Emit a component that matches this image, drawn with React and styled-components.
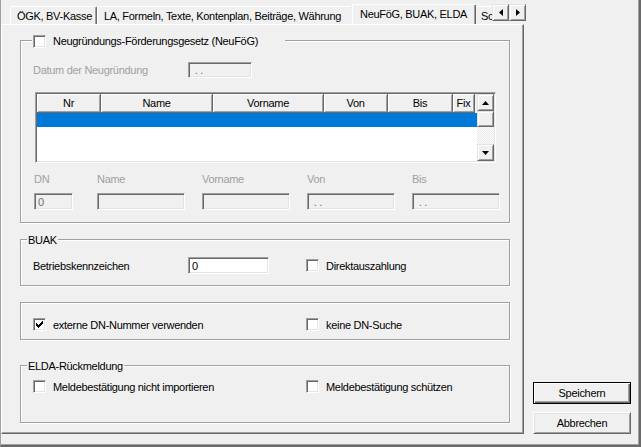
import React from "react";
import styled, { createGlobalStyle } from "styled-components";

const GlobalStyle = createGlobalStyle`
  html, body { margin: 0; padding: 0; background: #f0f0f0; }
  body {
    font-family: "Liberation Sans", Arial, sans-serif;
    font-size: 11px;
    letter-spacing: -0.3px;
    color: #000;
  }
  * { box-sizing: border-box; }
`;

const raised = `
  border: 1px solid;
  border-color: #e3e3e3 #696969 #696969 #e3e3e3;
  box-shadow: inset 1px 1px 0 #fff, inset -1px -1px 0 #a0a0a0;
`;

const sunken = `
  border: 1px solid;
  border-color: #a0a0a0 #fff #fff #a0a0a0;
  box-shadow: inset 1px 1px 0 #696969, inset -1px -1px 0 #e3e3e3;
`;

const S = {
  Window: styled.div`
    display: flex;
    width: 641px;
    height: 447px;
    background: #f0f0f0;
    border-left: 1px solid #a0a0a0;
    border-right: 2px solid #696969;
    border-bottom: 2px solid #696969;
    box-shadow: inset -1px -1px 0 #a0a0a0;
  `,
  TabControl: styled.div`
    display: flex;
    flex-direction: column;
    width: 525px;
    height: 434px;
    flex: none;
  `,
  TabStrip: styled.div`
    display: flex;
    height: 24px;
    padding-left: 9px;
  `,
  TabRow: styled.div`
    flex: 1;
    display: flex;
    align-items: flex-end;
    overflow: hidden;
  `,
  Tab: styled.div`
    flex: none;
    position: relative;
    width: ${p => p.$w}px;
    height: ${p => (p.$active ? 21 : 18)}px;
    margin: ${p => (p.$active ? "0 -2px -1px -2px" : "0")};
    z-index: ${p => (p.$active ? 1 : 0)};
    padding: 3px 0 0 ${p => (p.$active ? 7 : 6)}px;
    line-height: 13px;
    white-space: nowrap;
    overflow: hidden;
    background: #f0f0f0;
    border-top: 1px solid #fff;
    border-left: 1px solid #fff;
    border-right: 1px solid #696969;
    border-top-left-radius: 2px;
    border-top-right-radius: 2px;
    box-shadow: inset -1px 0 0 #a0a0a0;
  `,
  Arrows: styled.div`
    display: flex;
    align-self: flex-start;
    margin-top: 4px;
  `,
  ArrowButton: styled.div`
    width: 17px;
    height: 17px;
    display: flex;
    align-items: center;
    justify-content: center;
    background: #f0f0f0;
    ${raised}
  `,
  Panel: styled.div`
    width: 523px;
    height: 410px;
    padding: 15px 0 0 18px;
    border-top: 1px solid #fff;
    border-left: 1px solid #fff;
    border-right: 1px solid #696969;
    border-bottom: 1px solid #696969;
    box-shadow: inset -1px -1px 0 #a0a0a0;
  `,
  Group: styled.div`
    width: 490px;
    margin-top: ${p => p.$mt || 0}px;
    padding: ${p => p.$pad};
    border: 1px solid #a0a0a0;
    box-shadow: inset 1px 1px 0 #fff, 1px 1px 0 #fff;
  `,
  GroupTitle: styled.div`
    display: flex;
    align-items: center;
    gap: 7px;
    width: ${p => (p.$w ? `${p.$w}px` : "max-content")};
    height: 14px;
    line-height: 14px;
    margin: -7px 0 0 ${p => p.$ml}px;
    padding: 0 1px;
    background: #f0f0f0;
  `,
  FieldRow: styled.div`
    display: flex;
    align-items: center;
    height: ${p => p.$h || 17}px;
    margin-top: ${p => p.$mt || 0}px;
  `,
  Label: styled.div`
    width: ${p => p.$w}px;
    flex: none;
    color: ${p => (p.$disabled ? "#a0a0a0" : "#000")};
    line-height: 14px;
    white-space: nowrap;
  `,
  Input: styled.div`
    width: ${p => p.$w}px;
    height: ${p => p.$h || 17}px;
    flex: none;
    padding: 0 0 0 3px;
    display: flex;
    align-items: center;
    white-space: pre;
    color: ${p => (p.$disabled ? "#6d6d6d" : "#000")};
    background: ${p => (p.$disabled ? "#f0f0f0" : "#fff")};
    ${sunken}
  `,
  CheckRow: styled.div`
    display: grid;
    grid-template-columns: 273px 1fr;
    align-items: center;
    height: 17px;
    margin-top: ${p => p.$mt || 0}px;
  `,
  CheckItem: styled.div`
    display: flex;
    align-items: center;
    gap: 7px;
    white-space: nowrap;
  `,
  CheckBox: styled.div`
    width: 13px;
    height: 13px;
    flex: none;
    display: flex;
    align-items: center;
    justify-content: center;
    background: #fff;
    ${sunken}
  `,
  List: styled.div`
    display: flex;
    width: 461px;
    height: 71px;
    margin: 14px 0 0 2px;
    background: #fff;
    ${sunken}
    padding: 1px;
  `,
  ListBody: styled.div`
    flex: 1;
    display: flex;
    flex-direction: column;
  `,
  Header: styled.div`
    display: flex;
    height: 19px;
    background: #f0f0f0;
  `,
  HeadCell: styled.div`
    width: ${p => p.$w}px;
    flex: none;
    display: flex;
    align-items: center;
    justify-content: center;
    border-right: 1px solid #696969;
    border-bottom: 1px solid #696969;
    box-shadow: inset 1px 1px 0 #fff, inset -1px -1px 0 #a0a0a0;
  `,
  SelectedRow: styled.div`
    height: 14px;
    background: #0078d7;
  `,
  ScrollBar: styled.div`
    width: 17px;
    flex: none;
    display: flex;
    flex-direction: column;
  `,
  ScrollButton: styled.div`
    height: ${p => p.$h || 17}px;
    display: flex;
    align-items: center;
    justify-content: center;
    background: #f0f0f0;
    ${raised}
  `,
  Track: styled.div`
    flex: 1;
    background-image: conic-gradient(#fff 25%, #e8e8e8 0 50%, #fff 0 75%, #e8e8e8 0);
    background-size: 2px 2px;
  `,
  Fields: styled.div`
    display: grid;
    grid-template-columns: 63px 105px 105px 105px 88px;
    row-gap: 7px;
    margin: 9px 0 0 1px;
  `,
  Buttons: styled.div`
    flex: 1;
    display: flex;
    flex-direction: column;
    justify-content: flex-end;
    gap: 8px;
    padding: 0 0 11px 7px;
  `,
  Button: styled.div`
    width: 98px;
    height: 22px;
    display: flex;
    align-items: center;
    justify-content: center;
    background: #f0f0f0;
    ${p =>
      p.$default
        ? `border: 1px solid #000;
           box-shadow: inset 1px 1px 0 #fff, inset -1px -1px 0 #696969, inset -2px -2px 0 #a0a0a0;`
        : `border: 1px solid;
           border-color: #fff #696969 #696969 #fff;
           box-shadow: inset 1px 1px 0 #e3e3e3, inset -1px -1px 0 #a0a0a0;`}
  `
};

const Tick = () => (
  <svg width="7" height="7" viewBox="0 0 7 7" shapeRendering="crispEdges">
    {[2, 3, 4, 3, 2, 1, 0].map((y, i) => (
      <rect key={i} x={i} y={y} width="1" height="3" fill="#000" />
    ))}
  </svg>
);

const Check = ({ checked, children }) => (
  <S.CheckItem>
    <S.CheckBox>{checked && <Tick />}</S.CheckBox>
    {children}
  </S.CheckItem>
);

const Arrow = ({ dir }) => {
  const pts = {
    up: "0,4 3.5,0 7,4",
    down: "0,0 7,0 3.5,4",
    left: "4,0 4,7 0,3.5",
    right: "0,0 4,3.5 0,7"
  }[dir];
  const vert = dir === "up" || dir === "down";
  return (
    <svg width={vert ? 7 : 4} height={vert ? 4 : 7} viewBox={vert ? "0 0 7 4" : "0 0 4 7"}>
      <polygon points={pts} fill="#000" />
    </svg>
  );
};

const columns = [
  ["Nr", 64],
  ["Name", 112],
  ["Vorname", 111],
  ["Von", 64],
  ["Bis", 65],
  ["Fix", 22]
];

const fields = [
  ["DN", 39, "0"],
  ["Name", 88, ""],
  ["Vorname", 88, ""],
  ["Von", 88, " . ."],
  ["Bis", 88, " . ."]
];

export default function App() {
  return (
    <>
      <GlobalStyle />
      <S.Window>
        <S.TabControl>
          <S.TabStrip>
            <S.TabRow>
              <S.Tab $w={87}>ÖGK, BV-Kasse</S.Tab>
              <S.Tab $w={257}>LA, Formeln, Texte, Kontenplan, Beiträge, Währung</S.Tab>
              <S.Tab $w={124} $active>
                NeuFöG, BUAK, ELDA
              </S.Tab>
              <S.Tab $w={60}>Schnittstellen</S.Tab>
            </S.TabRow>
            <S.Arrows>
              <S.ArrowButton>
                <Arrow dir="left" />
              </S.ArrowButton>
              <S.ArrowButton>
                <Arrow dir="right" />
              </S.ArrowButton>
            </S.Arrows>
          </S.TabStrip>

          <S.Panel>
            <S.Group $pad="0 12px 12px 12px">
              <S.GroupTitle $w={253} $ml={-1}>
                <S.CheckBox />
                Neugründungs-Förderungsgesetz (NeuFöG)
              </S.GroupTitle>
              <S.FieldRow $h={16} $mt={14}>
                <S.Label $w={155} $disabled>
                  Datum der Neugründung
                </S.Label>
                <S.Input $w={64} $h={16} $disabled>
                  {" . ."}
                </S.Input>
              </S.FieldRow>

              <S.List>
                <S.ListBody>
                  <S.Header>
                    {columns.map(([name, w]) => (
                      <S.HeadCell key={name} $w={w}>
                        {name}
                      </S.HeadCell>
                    ))}
                  </S.Header>
                  <S.SelectedRow />
                </S.ListBody>
                <S.ScrollBar>
                  <S.ScrollButton>
                    <Arrow dir="up" />
                  </S.ScrollButton>
                  <S.ScrollButton $h={16} />
                  <S.Track />
                  <S.ScrollButton>
                    <Arrow dir="down" />
                  </S.ScrollButton>
                </S.ScrollBar>
              </S.List>

              <S.Fields>
                {fields.map(([label]) => (
                  <S.Label key={label} $w={60} $disabled>
                    {label}
                  </S.Label>
                ))}
                {fields.map(([label, w, value]) => (
                  <S.Input key={label} $w={w} $disabled>
                    {value}
                  </S.Input>
                ))}
              </S.Fields>
            </S.Group>

            <S.Group $mt={16} $pad="0 12px 11px 12px">
              <S.GroupTitle $ml={-6}>BUAK</S.GroupTitle>
              <S.CheckRow $mt={10}>
                <S.FieldRow>
                  <S.Label $w={155}>Betriebskennzeichen</S.Label>
                  <S.Input $w={81}>0</S.Input>
                </S.FieldRow>
                <Check>Direktauszahlung</Check>
              </S.CheckRow>
            </S.Group>

            <S.Group $mt={16} $pad="13px 12px 6px 12px">
              <S.CheckRow>
                <Check checked>externe DN-Nummer verwenden</Check>
                <Check>keine DN-Suche</Check>
              </S.CheckRow>
            </S.Group>

            <S.Group $mt={25} $pad="0 12px 27px 12px">
              <S.GroupTitle $ml={-6}>ELDA-Rückmeldung</S.GroupTitle>
              <S.CheckRow $mt={5}>
                <Check>Meldebestätigung nicht importieren</Check>
                <Check>Meldebestätigung schützen</Check>
              </S.CheckRow>
            </S.Group>
          </S.Panel>
        </S.TabControl>

        <S.Buttons>
          <S.Button $default>Speichern</S.Button>
          <S.Button>Abbrechen</S.Button>
        </S.Buttons>
      </S.Window>
    </>
  );
}
